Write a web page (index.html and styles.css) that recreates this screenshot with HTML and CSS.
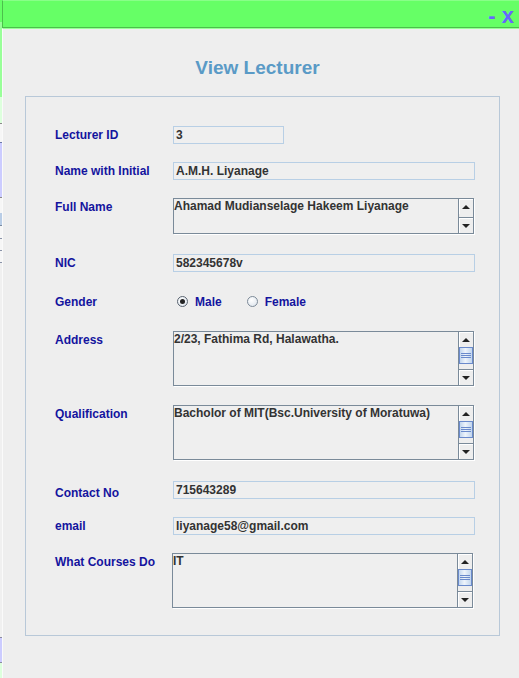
FILE: index.html
```html
<!DOCTYPE html>
<html>
<head>
<meta charset="utf-8">
<title>View Lecturer</title>
<link rel="stylesheet" href="styles.css">
</head>
<body>
<div class="screen">
  <div class="strip"></div>
  <div class="window">
    <div class="titlebar"><span class="ctl">- x</span></div>
    <div class="content">
      <h1 class="title">View Lecturer</h1>
      <div class="panel">
        <div class="row">
          <div class="label">Lecturer ID</div>
          <div class="field short">3</div>
        </div>
        <div class="row mt18">
          <div class="label">Name with Initial</div>
          <div class="field long">A.M.H. Liyanage</div>
        </div>
        <div class="row tall mt18">
          <div class="label">Full Name</div>
          <div class="area h36">
            <div class="text">Ahamad Mudianselage Hakeem Liyanage</div>
            <div class="sb">
              <div class="btn"><span class="arrow-up"></span></div>
              <div class="track"></div>
              <div class="btn down"><span class="arrow-down"></span></div>
            </div>
          </div>
        </div>
        <div class="row mt20">
          <div class="label">NIC</div>
          <div class="field long">582345678v</div>
        </div>
        <div class="row gender mt21">
          <div class="label">Gender</div>
          <div class="radios">
            <div class="opt"><span class="circle on"></span><span class="opt-text">Male</span></div>
            <div class="opt female"><span class="circle"></span><span class="opt-text">Female</span></div>
          </div>
        </div>
        <div class="row tall mt21">
          <div class="label">Address</div>
          <div class="area h55">
            <div class="text">2/23, Fathima Rd, Halawatha.</div>
            <div class="sb">
              <div class="btn"><span class="arrow-up"></span></div>
              <div class="thumb"><span class="grip"></span></div>
              <div class="track"></div>
              <div class="btn down"><span class="arrow-down"></span></div>
            </div>
          </div>
        </div>
        <div class="row tall mt19">
          <div class="label">Qualification</div>
          <div class="area h55">
            <div class="text">Bacholor of MIT(Bsc.University of Moratuwa)</div>
            <div class="sb">
              <div class="btn"><span class="arrow-up"></span></div>
              <div class="thumb"><span class="grip"></span></div>
              <div class="track"></div>
              <div class="btn down"><span class="arrow-down"></span></div>
            </div>
          </div>
        </div>
        <div class="row mt21">
          <div class="label low">Contact No</div>
          <div class="field long">715643289</div>
        </div>
        <div class="row mt18">
          <div class="label">email</div>
          <div class="field long">liyanage58@gmail.com</div>
        </div>
        <div class="row tall mt18">
          <div class="label">What Courses Do</div>
          <div class="area h55 shift">
            <div class="text">IT</div>
            <div class="sb">
              <div class="btn"><span class="arrow-up"></span></div>
              <div class="thumb"><span class="grip"></span></div>
              <div class="track"></div>
              <div class="btn down"><span class="arrow-down"></span></div>
            </div>
          </div>
        </div>
      </div>
    </div>
  </div>
</div>
</body>
</html>
```

FILE: styles.css
```css
* { box-sizing: border-box; }
html, body { margin: 0; padding: 0; }
body {
  width: 519px;
  height: 678px;
  overflow: hidden;
  background: #eeeeee;
  font-family: "Liberation Sans", Arial, sans-serif;
}
.screen { display: flex; height: 678px; }
.strip {
  width: 2px;
  flex: none;
  background: linear-gradient(to bottom,
    #66ff66 0 22px, #99ff99 22px 97px, #ddffdd 97px 123px,
    #8a8a8a 123px 124px, #f6f6f6 124px 142px, #6b79a8 142px 143px,
    #ccccff 143px 197px, #8a8a8a 197px 198px, #f6f6f6 198px 213px,
    #b9cde6 213px 225px, #7a8aa0 225px 226px, #f6f6f6 226px 238px,
    #8a93a8 238px 239px, #f6f6f6 239px 250px, #8a93a8 250px 251px,
    #f6f6f6 251px 262px, #8a93a8 262px 263px, #f0f0f0 263px 637px,
    #8a8aa0 637px 638px, #ccccff 638px 662px, #8a8aa0 662px 663px,
    #ddffdd 663px 678px);
}
.window { flex: 1; display: flex; flex-direction: column; }
.titlebar {
  height: 28px;
  background: #66ff66;
  border-top: 1px solid #88ff88;
  border-left: 1px solid #4cbf4c;
  border-bottom: 1px solid #4cbf4c;
  display: flex;
  justify-content: flex-end;
  align-items: flex-end;
  padding-right: 5px;
}
.ctl {
  font-size: 22px;
  font-weight: bold;
  line-height: 22px;
  color: #6666ff;
}
.content {
  flex: 1;
  border-top: 1px solid #99ff99;
  border-left: 1px solid #fafafa;
  padding-left: 22px;
}
.title {
  margin: 28px 0 0;
  width: 475px;
  padding-right: 10px;
  font-size: 19px;
  line-height: 22px;
  font-weight: bold;
  text-align: center;
  color: #5a9ac6;
}
.panel {
  margin-top: 17px;
  width: 475px;
  border: 1px solid #b8c8d8;
  padding: 29px 0 27px 29px;
}
.row { display: flex; align-items: center; }
.row.tall { align-items: flex-start; }
.row.tall .label { padding-top: 1px; }
.row.gender { height: 17px; }
.mt18 { margin-top: 18px; }
.mt19 { margin-top: 19px; }
.mt20 { margin-top: 20px; }
.mt21 { margin-top: 21px; }
.label, .opt-text {
  font-size: 12px;
  font-weight: bold;
  line-height: 16px;
  color: #14149e;
}
.label { width: 118px; flex: none; }
.label.low { padding-top: 3px; margin-bottom: -3px; }
.field {
  height: 18px;
  border: 1px solid #b8cfe5;
  background: #efefef;
  padding-left: 2px;
  font-size: 12px;
  font-weight: bold;
  line-height: 16px;
  color: #333333;
  white-space: nowrap;
}
.field.short { width: 111px; }
.field.long { width: 302px; }
.radios { display: flex; align-items: center; padding-left: 4px; }
.opt { display: flex; align-items: center; gap: 7px; }
.opt.female { margin-left: 25px; }
.circle {
  width: 11px;
  height: 11px;
  border-radius: 50%;
  border: 1px solid #7d8a98;
  background: radial-gradient(circle at 40% 35%, #ffffff, #d9e1ea);
  display: flex;
  align-items: center;
  justify-content: center;
}
.circle.on { border-color: #5a6470; }
.circle.on::after {
  content: "";
  width: 5px;
  height: 5px;
  border-radius: 50%;
  background: #222222;
}
.area {
  display: flex;
  width: 301px;
  border: 1px solid #7a8a99;
  box-shadow: 1px 1px 0 #ffffff;
  background: #efefef;
}
.area.h36 { height: 36px; }
.area.h55 { height: 55px; }
.area.shift { margin-left: -1px; }
.area .text {
  flex: 1;
  font-size: 12px;
  font-weight: bold;
  line-height: 14px;
  color: #333333;
  white-space: nowrap;
  overflow: hidden;
}
.sb {
  width: 15px;
  flex: none;
  border-left: 1px solid #7a8a99;
  display: flex;
  flex-direction: column;
  background: #eeeeee;
}
.btn {
  height: 15px;
  flex: none;
  background: #eeeeee;
  box-shadow: inset 1px 1px 0 #ffffff;
  display: flex;
  align-items: center;
  justify-content: center;
}
.btn.down { height: 16px; border-top: 1px solid #7a8a99; }
.track { flex: 1; }
.thumb {
  height: 17px;
  flex: none;
  border: 1px solid #6a8acc;
  background: linear-gradient(to right, #c2d6ee, #eef4fb 45%, #c2d6ee);
  display: flex;
  align-items: center;
  justify-content: center;
}
.grip {
  width: 10px;
  height: 5px;
  background: repeating-linear-gradient(to bottom, #6a8acc 0 1px, transparent 1px 2px);
}
.arrow-up, .arrow-down {
  width: 0;
  height: 0;
  border-left: 4px solid transparent;
  border-right: 4px solid transparent;
}
.arrow-up { border-bottom: 4px solid #222222; }
.arrow-down { border-top: 4px solid #222222; }
```
